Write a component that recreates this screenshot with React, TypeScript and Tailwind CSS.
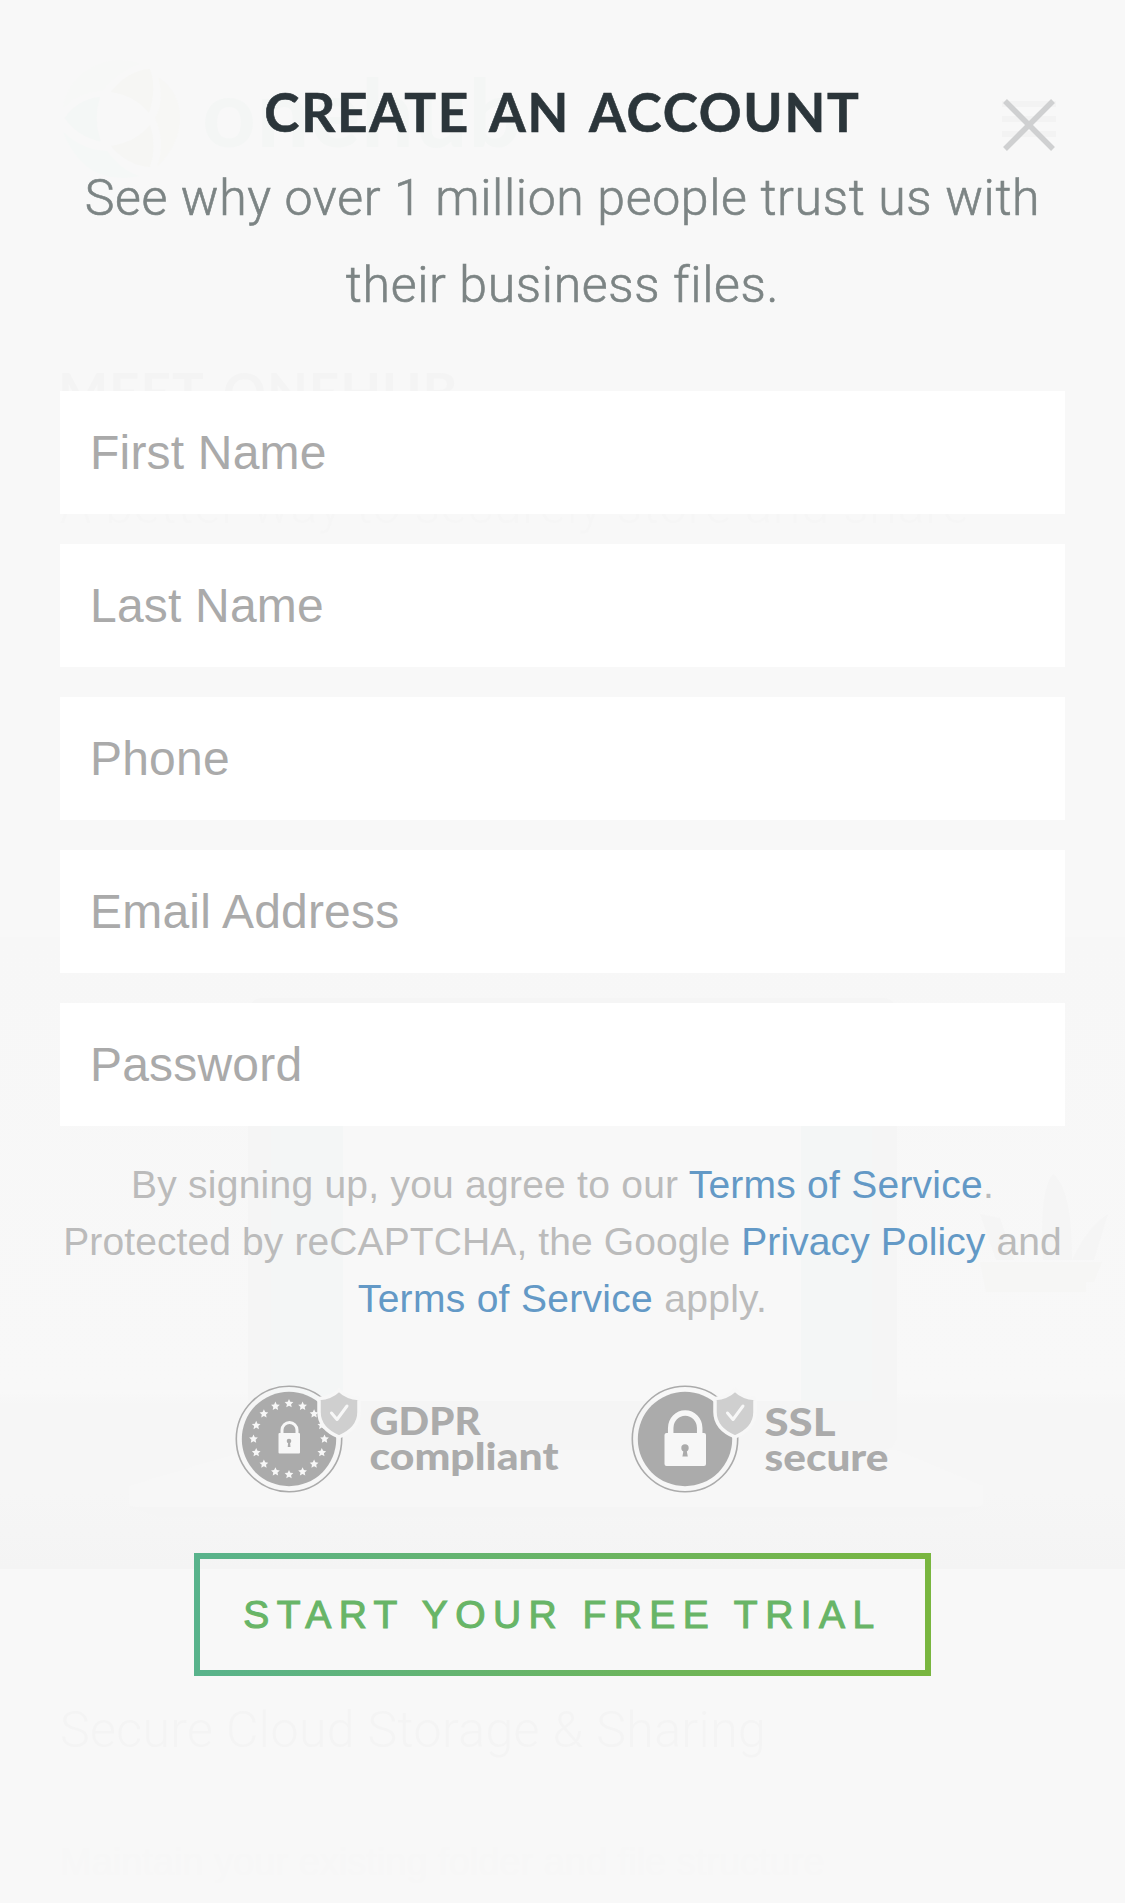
import React from "react";

const fields = ["First Name", "Last Name", "Phone", "Email Address", "Password"];

function starPath(cx: number, cy: number, r: number) {
  let d = "";
  for (let i = 0; i < 10; i++) {
    const a = -Math.PI / 2 + (i * Math.PI) / 5;
    const rad = i % 2 ? r * 0.48 : r;
    d += `${i ? "L" : "M"}${(cx + rad * Math.cos(a)).toFixed(2)} ${(cy + rad * Math.sin(a)).toFixed(2)}`;
  }
  return d + "Z";
}

function Shield() {
  return (
    <g>
      <path d="M104 5C99 10 92 13 84 13.500V27c0 12 8 20 20 25c12-5 20-13 20-25V13.500c-8-.5-15-3.500-20-8.500Z" fill="#cfcfcf" stroke="#f7f7f7" strokeWidth="3.500" />
      <path d="M96.500 28l5.500 6.500L112 21" fill="none" stroke="#f7f7f7" strokeWidth="3" strokeLinecap="round" strokeLinejoin="round" />
    </g>
  );
}

function Seal() {
  return (
    <g>
      <circle cx="54" cy="54" r="52.700" fill="none" stroke="#ababab" strokeWidth="1.600" />
      <circle cx="54" cy="54" r="47.200" fill="#ababab" />
    </g>
  );
}

const badgeText = "font-['Lato'] text-[38px] leading-none font-black";

function GdprBadge() {
  return (
    <svg className="h-[110px] w-[326px]" viewBox="0 0 326 110" aria-label="GDPR compliant">
      <Seal />
      {Array.from({ length: 16 }, (_, i) => {
        const a = (i * Math.PI) / 8;
        return <path key={i} d={starPath(54 + 35.5 * Math.sin(a), 54 - 35.5 * Math.cos(a), 4.6)} fill="#f7f7f7" />;
      })}
      <path d="M47 49v-4a7.500 7.500 0 0 1 15 0v4" fill="none" stroke="#f7f7f7" strokeWidth="3" />
      <rect x="43.500" y="48" width="21.500" height="20.500" rx="1" fill="#f7f7f7" />
      <circle cx="54" cy="56" r="2.300" fill="#ababab" />
      <path d="M53.300 56h1.600l.6 6h-2.800z" fill="#ababab" />
      <Shield />
      <text x="134.500" y="50" textLength="111" lengthAdjust="spacingAndGlyphs" fill="#ababab" className={badgeText}>GDPR</text>
      <text x="134.500" y="85" textLength="189" lengthAdjust="spacingAndGlyphs" fill="#ababab" className={badgeText}>compliant</text>
    </svg>
  );
}

function SslBadge() {
  return (
    <svg className="h-[110px] w-[262px]" viewBox="0 0 262 110" aria-label="SSL secure">
      <Seal />
      <path d="M39.700 49V43a14.500 15 0 0 1 29 0v6" fill="none" stroke="#f7f7f7" strokeWidth="5.500" />
      <rect x="33.500" y="48" width="41.500" height="33" rx="2" fill="#f7f7f7" />
      <circle cx="54" cy="63" r="3.700" fill="#ababab" />
      <path d="M53 63h2.200l1.600 8.500h-5.400z" fill="#ababab" />
      <Shield />
      <text x="133.500" y="50.500" textLength="71" lengthAdjust="spacingAndGlyphs" fill="#ababab" className={badgeText}>SSL</text>
      <text x="133.500" y="86" textLength="124" lengthAdjust="spacingAndGlyphs" fill="#ababab" className={badgeText}>secure</text>
    </svg>
  );
}

/* The page that lies behind the dialog, washed out by its veil. */
function Backdrop() {
  return (
    <div className="absolute inset-0 overflow-hidden" aria-hidden="true">
      <svg className="absolute left-[60px] top-[58px] h-[122px] w-[122px]" viewBox="0 0 122 122">
        <path d="M51 34Q68 12 90 11Q97 30 89 55Q76 38 51 34Z" fill="#f6f6f4" />
        <path d="M51 88Q76 84 90 67Q97 88 90 109Q68 108 51 88Z" fill="#f6f6f4" />
        <path d="M4.700 60Q18 41 40 38.700Q33 61 40.700 83.700Q18 79 4.700 60Z" fill="#f4f7f6" />
        <path d="M98 19Q120 34 120 60T97 109Q106 84 95 60Q105 44 98 19Z" fill="#f7f7f5" />
        <path d="M3 74Q22 92 47 93Q60 112 80 118Q26 130 3 74Z" fill="#f5f8f7" />
        <path d="M3 50Q18 34 42 33Q56 14 80 6Q50-5 25 14Q6 28 3 50Z" fill="#f7f8f7" />
      </svg>
      <div className="absolute left-[202px] top-[55px] whitespace-nowrap font-['Lato'] text-[94px] font-bold leading-[112px] tracking-[0.600px] text-[#f4f6f5]">onehub</div>
      <svg className="absolute left-[1002px] top-[101px] h-[36px] w-[54px]" viewBox="0 0 54 36" fill="#f3f3f3">
        <rect width="54" height="6" />
        <rect y="15" width="54" height="6" />
        <rect y="30" width="54" height="6" />
      </svg>
      <div className="absolute left-[58px] top-[360px] whitespace-nowrap font-['Lato'] text-[53px] font-bold leading-[64px] tracking-[1px] text-[#f4f4f4] [word-spacing:6px]">MEET ONEHUB</div>
      <div className="absolute left-[60px] top-[476px] whitespace-nowrap font-['Roboto'] text-[50px] font-light leading-[60px] tracking-[0.900px] text-[#f6f6f6]">A better way to securely store and share</div>
      <svg className="absolute left-0 top-[937px] h-[632px] w-[1125px]" viewBox="0 0 1125 632">
        <defs>
          <linearGradient id="desk" x1="0" y1="0" x2="0" y2="1">
            <stop offset="0" stopColor="#f7f7f7" />
            <stop offset="0.72" stopColor="#f8f8f8" />
            <stop offset="0.74" stopColor="#f6f6f6" />
            <stop offset="0.88" stopColor="#f6f6f6" />
            <stop offset="1" stopColor="#f4f4f4" />
          </linearGradient>
        </defs>
        <rect width="1125" height="632" fill="url(#desk)" />
        <rect x="248" y="61" width="649" height="452" rx="14" fill="#f5f5f5" />
        <rect x="271" y="84" width="72" height="380" fill="#f4f6f6" />
        <rect x="343" y="84" width="458" height="380" fill="#f8f8f8" />
        <rect x="801" y="84" width="71" height="380" fill="#f4f6f6" />
        <path d="M248 513H897L983 549V567Q983 570 970 570H142Q129 570 129 567V549Z" fill="#f7f7f7" />
        <path d="M129 570H983L950 580H160Z" fill="#f5f5f5" />
        <path d="M980 277l16 46h18l-14-42zM1043 323q-4-70 10-86q19 14 19 86zM1072 323q16-34 36-46l-14 46z" fill="#f5f5f5" />
        <path d="M980 325h122l-8 20h-8v10H986z" fill="#f6f6f5" />
      </svg>
      <div className="absolute left-[60px] top-[1700px] whitespace-nowrap font-['Roboto'] text-[50px] font-light leading-[60px] tracking-[0.400px] text-[#f4f4f4]">Secure Cloud Storage &amp; Sharing</div>
      <div className="absolute left-[60px] top-[1838px] whitespace-nowrap text-[38px] leading-[48px] text-[#f7f7f7]">Maintain your existing folder and file structure</div>
    </div>
  );
}

export default function App() {
  return (
    <main className="relative h-[1903px] w-[1125px] overflow-hidden bg-[#f8f8f8] font-['Liberation_Sans',sans-serif]">
      <Backdrop />
      <section className="relative flex flex-col items-center px-[60px] pt-[80px]">
        <button aria-label="Close" className="absolute left-[1000px] top-[97px]">
          <svg className="h-[56px] w-[58px]" viewBox="0 0 58 56" fill="none" stroke="#cfd0d1" strokeWidth="5.500">
            <path d="M5 4L53 52M53 4L5 52" />
          </svg>
        </button>
        <h1 className="whitespace-nowrap font-['Lato'] text-[53px] font-bold leading-[64px] tracking-[1.800px] text-[#2b353a] [-webkit-text-stroke:0.600px_#2b353a] [word-spacing:6px]">CREATE AN ACCOUNT</h1>
        <p className="mt-[11px] whitespace-nowrap text-center font-['Roboto'] text-[50px] font-light leading-[87px] tracking-[0.640px] text-[#7c8484] [-webkit-text-stroke:0.600px_#7c8484]">
          See why over 1 million people trust us with<br />their business files.
        </p>
        <form className="mt-[62px] flex w-full flex-col gap-[30px]">
          {fields.map((label) => (
            <input
              key={label}
              type="text"
              aria-label={label}
              placeholder={label}
              className="h-[123px] w-full bg-white px-[30px] text-[48px] tracking-[0.200px] text-[#333] placeholder:text-[#aaa]"
            />
          ))}
        </form>
        <p className="mt-[30px] whitespace-nowrap text-center text-[39px] leading-[57px] text-[#bbb]">
          <span className="tracking-[0.240px]">By signing up, you agree to our <a className="text-[#6399c6]">Terms of Service</a>.</span><br />
          <span className="tracking-[0.110px]">Protected by reCAPTCHA, the Google <a className="text-[#6399c6]">Privacy Policy</a> and</span><br />
          <span className="tracking-[0.300px]"><a className="text-[#6399c6]">Terms of Service</a> apply.</span>
        </p>
        <div className="mt-[58px] flex w-full gap-[70px] pl-[175px]">
          <GdprBadge />
          <SslBadge />
        </div>
        <button className="mt-[58px] h-[123px] w-[737px] whitespace-nowrap border-[6px] pt-[2px] text-[39px] tracking-[7.450px] text-[#68b567] [-webkit-text-stroke:1.100px_#68b567] [border-image:linear-gradient(to_right,#59b38c,#79b63f)_6]">
          START YOUR FREE TRIAL
        </button>
      </section>
    </main>
  );
}
